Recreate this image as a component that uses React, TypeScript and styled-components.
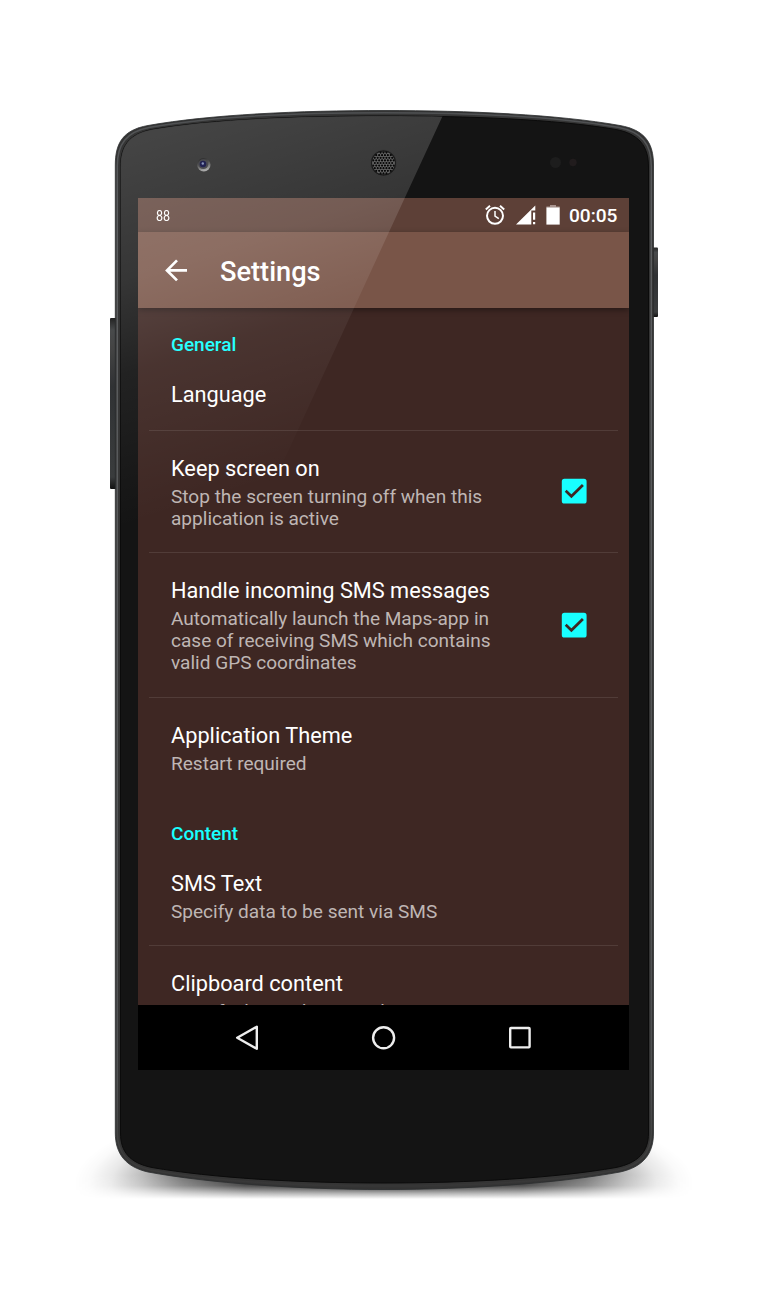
import React from "react";
import styled, { createGlobalStyle } from "styled-components";

const GlobalStyle = createGlobalStyle`
  * { box-sizing: border-box; }
  body { margin: 0; background: #fff; font-family: Roboto, "Noto Sans", sans-serif; }
`;

const Stage = styled.main`
  position: relative;
  width: 768px;
  height: 1298px;
  padding: 198px 139px 0 138px;
  overflow: hidden;
  background: #fff;
`;

const Layer = styled.svg`
  position: absolute;
  left: 0;
  top: 0;
  pointer-events: none;
`;

const SheenLayer = styled(Layer)`
  z-index: 2;
`;

const Screen = styled.section`
  position: relative;
  display: flex;
  flex-direction: column;
  width: 491px;
  height: 872px;
  overflow: hidden;
  background: #3e2723;
  color: #fff;
`;

const StatusBar = styled.header`
  display: flex;
  align-items: center;
  justify-content: space-between;
  flex: 0 0 34px;
  padding: 0 11px 0 18px;
  background: #5d4037;
`;

const Notification = styled.span`
  padding-top: 1px;
  font-size: 14.6px;
  line-height: 20px;
  transform: scaleX(0.86);
  transform-origin: left;
`;

const StatusIcons = styled.div`
  display: flex;
  align-items: center;
`;

const Clock = styled.time`
  width: 49px;
  margin-left: 9px;
  padding-top: 2px;
  font-size: 19.1px;
  font-weight: 500;
  line-height: 24px;
  white-space: nowrap;
`;

const AppBar = styled.div`
  position: relative;
  z-index: 1;
  display: flex;
  align-items: center;
  flex: 0 0 76px;
  gap: 31px;
  padding: 0 25px 0 26px;
  background: #795548;
  box-shadow: 0 2px 6px rgba(0, 0, 0, 0.38);
`;

const Title = styled.h1`
  margin: 4px 0 0;
  font-size: 27.2px;
  font-weight: 500;
  line-height: 34px;
`;

const Preferences = styled.div`
  flex: 1 1 0;
  min-height: 0;
  padding-top: 11px;
  overflow: hidden;
`;

const Category = styled.h2<{ $spaced?: boolean }>`
  margin: 0;
  padding: ${(p) => (p.$spaced ? "25px" : "13.5px")} 33px 0;
  height: ${(p) => (p.$spaced ? "49px" : "38px")};
  font-size: 19px;
  font-weight: 500;
  line-height: 24px;
  color: #18ffff;
`;

const Row = styled.div<{ $height: number; $last?: boolean }>`
  display: flex;
  justify-content: space-between;
  height: ${(p) => p.$height}px;
  margin: 0 11px;
  padding: 25px 31px 0 22px;
  border-bottom: ${(p) => (p.$last ? "0" : "1.4px solid #513c38")};
`;

const RowTitle = styled.div`
  font-size: 21.75px;
  line-height: 26px;
  white-space: nowrap;
`;

const Summary = styled.div`
  margin-top: 4px;
  font-size: 19.06px;
  line-height: 22.3px;
  color: #bfb6b4;
  white-space: pre-line;
`;

const CheckSlot = styled.div`
  display: flex;
  align-items: center;
  padding-bottom: 25px;
`;

const NavBar = styled.nav`
  position: relative;
  display: flex;
  align-items: center;
  justify-content: space-between;
  flex: 0 0 65px;
  padding: 0 96px;
  background: #000;
`;

const Checkbox = () => (
  <CheckSlot>
    <svg width="26" height="26" viewBox="0 0 26 26">
      <rect x="0.8" y="0.8" width="24.8" height="24.8" rx="2.6" fill="#18ffff" />
      <path d="M4.7 12.8 10.4 18.3 21.9 7" fill="none" stroke="#3e2723" strokeWidth="2.7" />
    </svg>
  </CheckSlot>
);

type PreferenceProps = {
  title: string;
  summary?: string;
  height: number;
  checked?: boolean;
  last?: boolean;
};

const Preference = ({ title, summary, height, checked, last }: PreferenceProps) => (
  <Row $height={height} $last={last}>
    <div>
      <RowTitle>{title}</RowTitle>
      {summary && <Summary>{summary}</Summary>}
    </div>
    {checked && <Checkbox />}
  </Row>
);

const speakerDots: [number, number][] = [];
for (let r = -4; r <= 4; r++) {
  for (let c = -4; c <= 4; c++) {
    const x = c * 2.9 + (r % 2 ? 1.45 : 0);
    const y = r * 2.6;
    if (x * x + y * y < 118) speakerDots.push([x, y]);
  }
}

const bodyPath =
  "M115.3 165C115.3 143 123 130 148 125.5C210 114.5 300 110.5 384 110.5S558 114.5 620 125.5C645 130 653.5 143 653.5 165V1133C653.5 1154 643 1167 620 1172C560 1183 470 1189.5 384 1189.5S208 1183 148 1172C126 1167 115.3 1154 115.3 1133Z";
const facePath =
  "M120.5 167C120.5 146 129 134 152 129.5C214 119 300 116 384 116S554 119 616 129.5C639 134 648.5 146 648.5 167V1133C648.5 1152 638 1163 616 1167.5C556 1178 470 1183 384 1183S212 1178 152 1167.5C130 1163 120.5 1152 120.5 1133Z";

const PhoneBody = () => (
  <Layer width="768" height="1298" viewBox="0 0 768 1298">
    <defs>
      <radialGradient id="ground" gradientUnits="userSpaceOnUse" cx="0" cy="0" r="1" gradientTransform="translate(384 1184) scale(310 90)">
        <stop offset="0" stopColor="#000" stopOpacity="1" />
        <stop offset=".45" stopColor="#000" stopOpacity=".85" />
        <stop offset=".65" stopColor="#000" stopOpacity=".55" />
        <stop offset=".78" stopColor="#000" stopOpacity=".27" />
        <stop offset=".88" stopColor="#000" stopOpacity=".09" />
        <stop offset=".95" stopColor="#000" stopOpacity=".02" />
        <stop offset="1" stopColor="#000" stopOpacity="0" />
      </radialGradient>
      <linearGradient id="groundFade" gradientUnits="userSpaceOnUse" x1="0" y1="1175" x2="0" y2="1199">
        <stop offset="0" stopColor="#fff" />
        <stop offset=".45" stopColor="#ccc" />
        <stop offset=".75" stopColor="#555" />
        <stop offset="1" stopColor="#000" />
      </linearGradient>
      <mask id="groundMask" maskUnits="userSpaceOnUse" x="60" y="1090" width="650" height="115">
        <rect x="60" y="1090" width="650" height="115" fill="url(#groundFade)" />
      </mask>
      <linearGradient id="rim" gradientUnits="userSpaceOnUse" x1="0" y1="110" x2="0" y2="1190">
        <stop offset="0" stopColor="#4e5052" />
        <stop offset=".1" stopColor="#5c5e60" />
        <stop offset=".9" stopColor="#4e5051" />
        <stop offset=".97" stopColor="#3c3c3c" />
        <stop offset="1" stopColor="#363636" />
      </linearGradient>
      <linearGradient id="key" x1="0" y1="0" x2="0" y2="1">
        <stop offset="0" stopColor="#222" />
        <stop offset=".07" stopColor="#484a4b" />
        <stop offset=".18" stopColor="#444" />
        <stop offset=".4" stopColor="#303234" />
        <stop offset=".93" stopColor="#3a3c3d" />
        <stop offset="1" stopColor="#111" />
      </linearGradient>
      <linearGradient id="lens" x1="0" y1="0" x2="0.3" y2="1">
        <stop offset="0" stopColor="#222" />
        <stop offset=".5" stopColor="#555" />
        <stop offset="1" stopColor="#aaa" />
      </linearGradient>
    </defs>
    <rect x="60" y="1095" width="650" height="108" fill="url(#ground)" mask="url(#groundMask)" />
    <rect x="110" y="318" width="7" height="171" rx="1" fill="url(#key)" />
    <rect x="651" y="247.5" width="7" height="69.5" rx="1" fill="url(#key)" />
    <path d={bodyPath} fill="#343434" />
    <path d={bodyPath} fill="none" stroke="#2b2d2e" strokeWidth="0.8" />
    <path d="M117.3 1133V166C117.3 144 126 132 150 127.3C212 116.3 300 112.7 384 112.7S556 116.3 618 127.3C642 132 651.3 144 651.3 166V1133C651.3 1153 641 1165 618 1170C558 1181 470 1186 384 1186S210 1181 150 1170C128 1165 117.3 1153 117.3 1133Z" fill="none" stroke="url(#rim)" strokeWidth="1.5" />
    <path d={facePath} fill="#141414" stroke="#0b0b0b" strokeWidth="1" />
    <circle cx="555.5" cy="162.5" r="5.5" fill="#1d1d1d" />
    <circle cx="573" cy="162.5" r="3.7" fill="#211c1d" />
  </Layer>
);

const Sheen = () => (
  <SheenLayer width="768" height="1298" viewBox="0 0 768 1298">
    <defs>
      <linearGradient id="sheen" gradientUnits="userSpaceOnUse" x1="200" y1="120" x2="310" y2="470">
        <stop offset="0" stopColor="#fff" stopOpacity=".205" />
        <stop offset=".35" stopColor="#fff" stopOpacity=".145" />
        <stop offset=".6" stopColor="#fff" stopOpacity=".06" />
        <stop offset="1" stopColor="#fff" stopOpacity="0" />
      </linearGradient>
      <clipPath id="faceClip">
        <path d={facePath} />
      </clipPath>
    </defs>
    <path d="M110 100H450L389 232 354 308 262 508 110 570Z" fill="url(#sheen)" clipPath="url(#faceClip)" />
    <circle cx="203.8" cy="164.8" r="6.7" fill="url(#lens)" />
    <circle cx="203.3" cy="164.2" r="4.9" fill="#4b4b50" />
    <circle cx="203" cy="164" r="3.3" fill="#222252" />
    <circle cx="202.8" cy="163.5" r="1.2" fill="#8994bd" />
    <circle cx="383.5" cy="163" r="13.2" fill="#1c1c1c" stroke="#454545" strokeWidth=".6" />
    <circle cx="383.5" cy="163" r="11.3" fill="#686868" />
    {speakerDots.map(([x, y], i) => (
      <circle key={i} cx={383.5 + x} cy={163 + y} r="1.1" fill="#070707" />
    ))}
  </SheenLayer>
);

const AlarmIcon = () => (
  <svg width="22" height="22" viewBox="0 0 22 22" fill="none" stroke="#fff">
    <circle cx="11" cy="11.8" r="8" strokeWidth="2" />
    <path d="M11 7v5.2l3.8 2.5" strokeWidth="1.5" />
    <path d="M1.8 5.4 6 1.8M20.2 5.4 16 1.8" strokeWidth="2" />
  </svg>
);

const StatusGlyph = styled.svg`
  margin-left: 10px;
`;

const SignalIcon = () => (
  <StatusGlyph width="20" height="20" viewBox="0 0 20 20" fill="#fff">
    <path d="M0 19.5 19.3.5V5.5H15.3V19.5Z" />
    <path d="M17 7.5h2.2v7.3H17zM17 16.9h2.2v2.4H17z" />
  </StatusGlyph>
);

const BatteryIcon = () => (
  <StatusGlyph width="14" height="20" viewBox="0 0 14 20">
    <path d="M.4 2.4V1.4H4V0h6v1.4h3.7v1Z" fill="#a8938e" />
    <path d="M.4 2.4h13.3V19.6H.4Z" fill="#fff" />
  </StatusGlyph>
);

export default function App() {
  return (
    <>
      <GlobalStyle />
      <Stage>
        <PhoneBody />
        <Screen>
          <StatusBar>
            <Notification>88</Notification>
            <StatusIcons>
              <AlarmIcon />
              <SignalIcon />
              <BatteryIcon />
              <Clock>00:05</Clock>
            </StatusIcons>
          </StatusBar>
          <AppBar>
            <svg width="25" height="24" viewBox="0 0 25 24" fill="none" stroke="#fff" strokeWidth="2.7">
              <path d="M23 12.4H3M13 2.4 3 12.4l10 10" />
            </svg>
            <Title>Settings</Title>
          </AppBar>
          <Preferences>
            <Category>General</Category>
            <Preference title="Language" height={73.8} />
            <Preference
              title="Keep screen on"
              summary={"Stop the screen turning off when this\napplication is active"}
              height={122}
              checked
            />
            <Preference
              title="Handle incoming SMS messages"
              summary={"Automatically launch the Maps-app in\ncase of receiving SMS which contains\nvalid GPS coordinates"}
              height={144.8}
              checked
            />
            <Preference title="Application Theme" summary="Restart required" height={99.2} last />
            <Category $spaced>Content</Category>
            <Preference title="SMS Text" summary="Specify data to be sent via SMS" height={100.4} />
            <Preference title="Clipboard content" summary="Specify data to be copied" height={100} last />
          </Preferences>
          <NavBar>
            <svg width="26" height="28" viewBox="0 0 26 28" fill="none" stroke="#eee" strokeWidth="2.4">
              <path d="M22.8 2.7V24.8L3.2 13.7Z" strokeLinejoin="round" />
            </svg>
            <svg width="26" height="26" viewBox="0 0 26 26" fill="none" stroke="#eee" strokeWidth="2.4">
              <circle cx="12.6" cy="12.8" r="10.5" />
            </svg>
            <svg width="26" height="26" viewBox="0 0 26 26" fill="none" stroke="#eee" strokeWidth="2.4">
              <rect x="3.2" y="3" width="19.4" height="19.4" rx="0.8" />
            </svg>
          </NavBar>
        </Screen>
        <Sheen />
      </Stage>
    </>
  );
}
